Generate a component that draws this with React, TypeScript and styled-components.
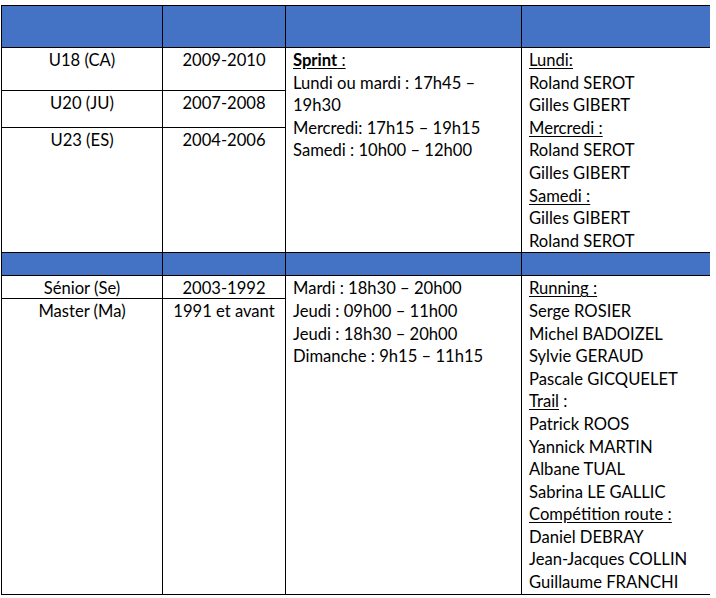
import React from 'react';
import styled, { createGlobalStyle, css } from 'styled-components';

const GlobalStyle = createGlobalStyle`
  html, body {
    margin: 0;
    padding: 0;
    background: #fff;
  }
  body {
    padding: 5px 0 0 1px;
    font-family: Lato, "Open Sans", "Liberation Sans", sans-serif;
    color: #000;
  }
`;

const Grid = styled.div`
  display: grid;
  width: 709px;
  grid-template-columns: 160px 122px 235px 188px;
  grid-template-rows: 41px 42px 36px auto 22px 22px auto;
  gap: 1px;
  padding: 1px;
  background: #000;
  box-sizing: border-box;
  font-size: 16.6px;
  line-height: 22.6px;
`;

const Band = styled.div`
  background: #4472c4;
`;

const Cell = styled.div<{ $center?: boolean; $row?: string; $col?: number }>`
  background: #fff;
  padding: 1px 7px 0;
  white-space: nowrap;
  ${(p) =>
    p.$center &&
    css`
      text-align: center;
      padding: 1px 2px 0;
    `};
  ${(p) =>
    p.$row &&
    css`
      grid-row: ${p.$row};
    `};
  ${(p) =>
    p.$col &&
    css`
      grid-column: ${p.$col};
    `};
`;

const Line = styled.div``;

const Label = styled.span<{ $bold?: boolean }>`
  text-decoration: underline;
  text-underline-offset: 2px;
  font-weight: ${(p) => (p.$bold ? 700 : 400)};
`;

const App = () => {
  return (
    <>
      <GlobalStyle />
      <Grid>
        <Band />
        <Band />
        <Band />
        <Band />

        <Cell $center $row="2" $col={1}>U18 (CA)</Cell>
        <Cell $center $row="2" $col={2}>2009-2010</Cell>
        <Cell $row="2 / 5" $col={3}>
          <Line>
            <Label $bold>Sprint</Label>
            <Label> :</Label>
          </Line>
          <Line>Lundi ou mardi : 17h45 –</Line>
          <Line>19h30</Line>
          <Line>Mercredi: 17h15 – 19h15</Line>
          <Line>Samedi : 10h00 – 12h00</Line>
        </Cell>
        <Cell $row="2 / 5" $col={4}>
          <Line><Label>Lundi:</Label></Line>
          <Line>Roland SEROT</Line>
          <Line>Gilles GIBERT</Line>
          <Line><Label>Mercredi :</Label></Line>
          <Line>Roland SEROT</Line>
          <Line>Gilles GIBERT</Line>
          <Line><Label>Samedi :</Label></Line>
          <Line>Gilles GIBERT</Line>
          <Line>Roland SEROT</Line>
        </Cell>
        <Cell $center $row="3" $col={1}>U20 (JU)</Cell>
        <Cell $center $row="3" $col={2}>2007-2008</Cell>
        <Cell $center $row="4" $col={1}>U23 (ES)</Cell>
        <Cell $center $row="4" $col={2}>2004-2006</Cell>

        <Band />
        <Band />
        <Band />
        <Band />

        <Cell $center $row="6" $col={1}>Sénior (Se)</Cell>
        <Cell $center $row="6" $col={2}>2003-1992</Cell>
        <Cell $row="6 / 8" $col={3}>
          <Line>Mardi : 18h30 – 20h00</Line>
          <Line>Jeudi : 09h00 – 11h00</Line>
          <Line>Jeudi : 18h30 – 20h00</Line>
          <Line>Dimanche : 9h15 – 11h15</Line>
        </Cell>
        <Cell $row="6 / 8" $col={4}>
          <Line><Label>Running :</Label></Line>
          <Line>Serge ROSIER</Line>
          <Line>Michel BADOIZEL</Line>
          <Line>Sylvie GERAUD</Line>
          <Line>Pascale GICQUELET</Line>
          <Line><Label>Trail</Label> :</Line>
          <Line>Patrick ROOS</Line>
          <Line>Yannick MARTIN</Line>
          <Line>Albane TUAL</Line>
          <Line>Sabrina LE GALLIC</Line>
          <Line><Label>Compétition route :</Label></Line>
          <Line>Daniel DEBRAY</Line>
          <Line>Jean-Jacques COLLIN</Line>
          <Line>Guillaume FRANCHI</Line>
        </Cell>
        <Cell $center $row="7" $col={1}>Master (Ma)</Cell>
        <Cell $center $row="7" $col={2}>1991 et avant</Cell>
      </Grid>
    </>
  );
};

export default App;
